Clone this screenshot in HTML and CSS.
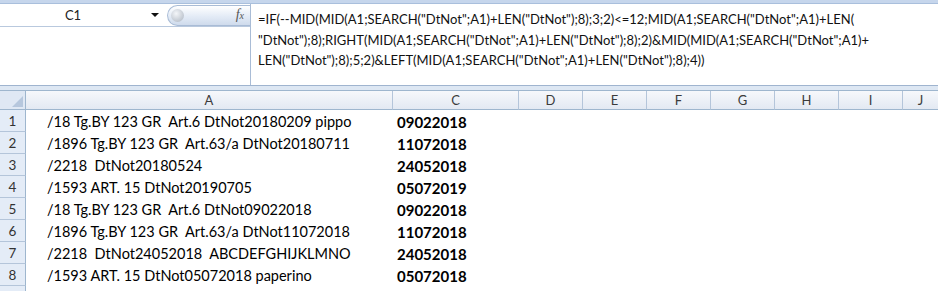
FILE: index.html
```html
<!DOCTYPE html>
<html lang="it">
<head>
  <meta charset="UTF-8">
  <title>Foglio1</title>
  <link rel="stylesheet" href="styles.css">
</head>
<body>

<div class="app">
  <!-- barra della formula -->
  <div class="topline"></div>
  <div class="fbar">
    <div class="left">
      <div class="namerow">
        <div class="namebox">C1</div>
        <span class="arrow"></span>
        <div class="pill">
          <span class="knob"></span>
          <span class="fx"><i>f</i><small>x</small></span>
        </div>
      </div>
    </div>
    <div class="formula">
      <div>=IF(--MID(MID(A1;SEARCH("DtNot";A1)+LEN("DtNot");8);3;2)&lt;=12;MID(A1;SEARCH("DtNot";A1)+LEN(</div>
      <div>"DtNot");8);RIGHT(MID(A1;SEARCH("DtNot";A1)+LEN("DtNot");8);2)&amp;MID(MID(A1;SEARCH("DtNot";A1)+</div>
      <div>LEN("DtNot");8);5;2)&amp;LEFT(MID(A1;SEARCH("DtNot";A1)+LEN("DtNot");8);4))</div>
    </div>
  </div>
  <div class="gap"></div>

  <!-- griglia -->
  <div class="sheet">
    <div class="corner"></div>
    <div class="colh">A</div>
    <div class="colh">C</div>
    <div class="colh">D</div>
    <div class="colh">E</div>
    <div class="colh">F</div>
    <div class="colh">G</div>
    <div class="colh">H</div>
    <div class="colh">I</div>
    <div class="colh last">J</div>

    <div class="rowh">1</div><div class="cell txt">/18 Tg.BY 123 GR&nbsp; Art.6 DtNot20180209 pippo</div><div class="cell num">09022018</div><div class="rest"></div>
    <div class="rowh">2</div><div class="cell txt">/1896 Tg.BY 123 GR&nbsp; Art.63/a DtNot20180711</div><div class="cell num">11072018</div><div class="rest"></div>
    <div class="rowh">3</div><div class="cell txt">/2218&nbsp; DtNot20180524</div><div class="cell num">24052018</div><div class="rest"></div>
    <div class="rowh">4</div><div class="cell txt">/1593 ART. 15 DtNot20190705</div><div class="cell num">05072019</div><div class="rest"></div>
    <div class="rowh">5</div><div class="cell txt">/18 Tg.BY 123 GR&nbsp; Art.6 DtNot09022018</div><div class="cell num">09022018</div><div class="rest"></div>
    <div class="rowh">6</div><div class="cell txt">/1896 Tg.BY 123 GR&nbsp; Art.63/a DtNot11072018</div><div class="cell num">11072018</div><div class="rest"></div>
    <div class="rowh">7</div><div class="cell txt">/2218&nbsp; DtNot24052018&nbsp; ABCDEFGHIJKLMNO</div><div class="cell num">24052018</div><div class="rest"></div>
    <div class="rowh">8</div><div class="cell txt">/1593 ART. 15 DtNot05072018 paperino</div><div class="cell num">05072018</div><div class="rest"></div>
    <div class="rowh"></div>
  </div>
</div>

</body>
</html>
```

FILE: styles.css
```css
* { margin: 0; padding: 0; box-sizing: border-box; }
body { background: #fff; font-family: Lato, "Open Sans", sans-serif; color: #000; }
.app { width: 938px; height: 291px; overflow: hidden; }

.topline { height: 4px; background: #c6d6ec; border-bottom: 1px solid #a9bfdc; }

.fbar { display: flex; height: 82px; border-bottom: 1px solid #9fb4cf; }
.fbar .left { width: 250px; }
.namerow { display: flex; align-items: center; height: 23px;
  border-bottom: 1px solid #b9c9de; }
.namebox { width: 146px; text-align: center; font-size: 13px; color: #222; }
.arrow { width: 0; height: 0; margin-left: 5px; border-left: 4px solid transparent;
  border-right: 4px solid transparent; border-top: 4px solid #111; }
.pill { display: flex; align-items: center; justify-content: space-between;
  margin-left: 8px; width: 83px; height: 21px; padding: 0 6px 0 3px;
  border: 1px solid #a9bcd6; border-right: none; border-radius: 11px 0 0 11px;
  background: linear-gradient(#ffffff, #e3ebf6 55%, #cfdbec); }
.knob { width: 13px; height: 13px; border-radius: 50%;
  background: radial-gradient(circle at 40% 35%, #f4f6f9, #aab3bf); }
.fx { font-family: "Liberation Serif", serif; font-size: 14px; color: #555; }
.fx small { font-size: 10px; font-style: italic; }

.formula { flex: 1; border-left: 1px solid #a9bcd6; padding: 5px 0 0 7px;
  font-size: 13px; line-height: 20.5px; white-space: nowrap; color: #111; }

.gap { height: 5px; background: #dde7f3; border-bottom: 1px solid #9eb6ce; }

.sheet { display: grid;
  grid-template-columns: 26px 367px 126px 64px 64px 64px 64px 64px 64px 35px;
  grid-template-rows: 19px repeat(8, 22px) 10px; }
.corner { background: #dfe8f4; border-right: 1px solid #9eb6ce;
  border-bottom: 1px solid #9eb6ce; position: relative; }
.corner::after { content: ""; position: absolute; right: 2px; bottom: 2px;
  border-left: 11px solid transparent; border-bottom: 11px solid #b6c7dd; }
.colh { background: linear-gradient(#f6f8fb, #e3e9f2); border-right: 1px solid #b4c5da;
  border-bottom: 1px solid #9eb6ce; text-align: center; font-size: 13px;
  line-height: 18px; color: #3b3b3b; }
.colh.last { border-right: none; }
.rowh { grid-column: 1; background: #e4ecf7; border-right: 1px solid #9eb6ce;
  border-bottom: 1px solid #b4c5da; text-align: center; font-size: 13.5px;
  line-height: 22px; color: #333; }
.cell { font-size: 15px; line-height: 24px; white-space: nowrap; }
.txt { padding-left: 21px; font-size: 14.5px; }
.num { padding-left: 4px; font-weight: bold; }
.rest { grid-column: 4 / -1; }
```
